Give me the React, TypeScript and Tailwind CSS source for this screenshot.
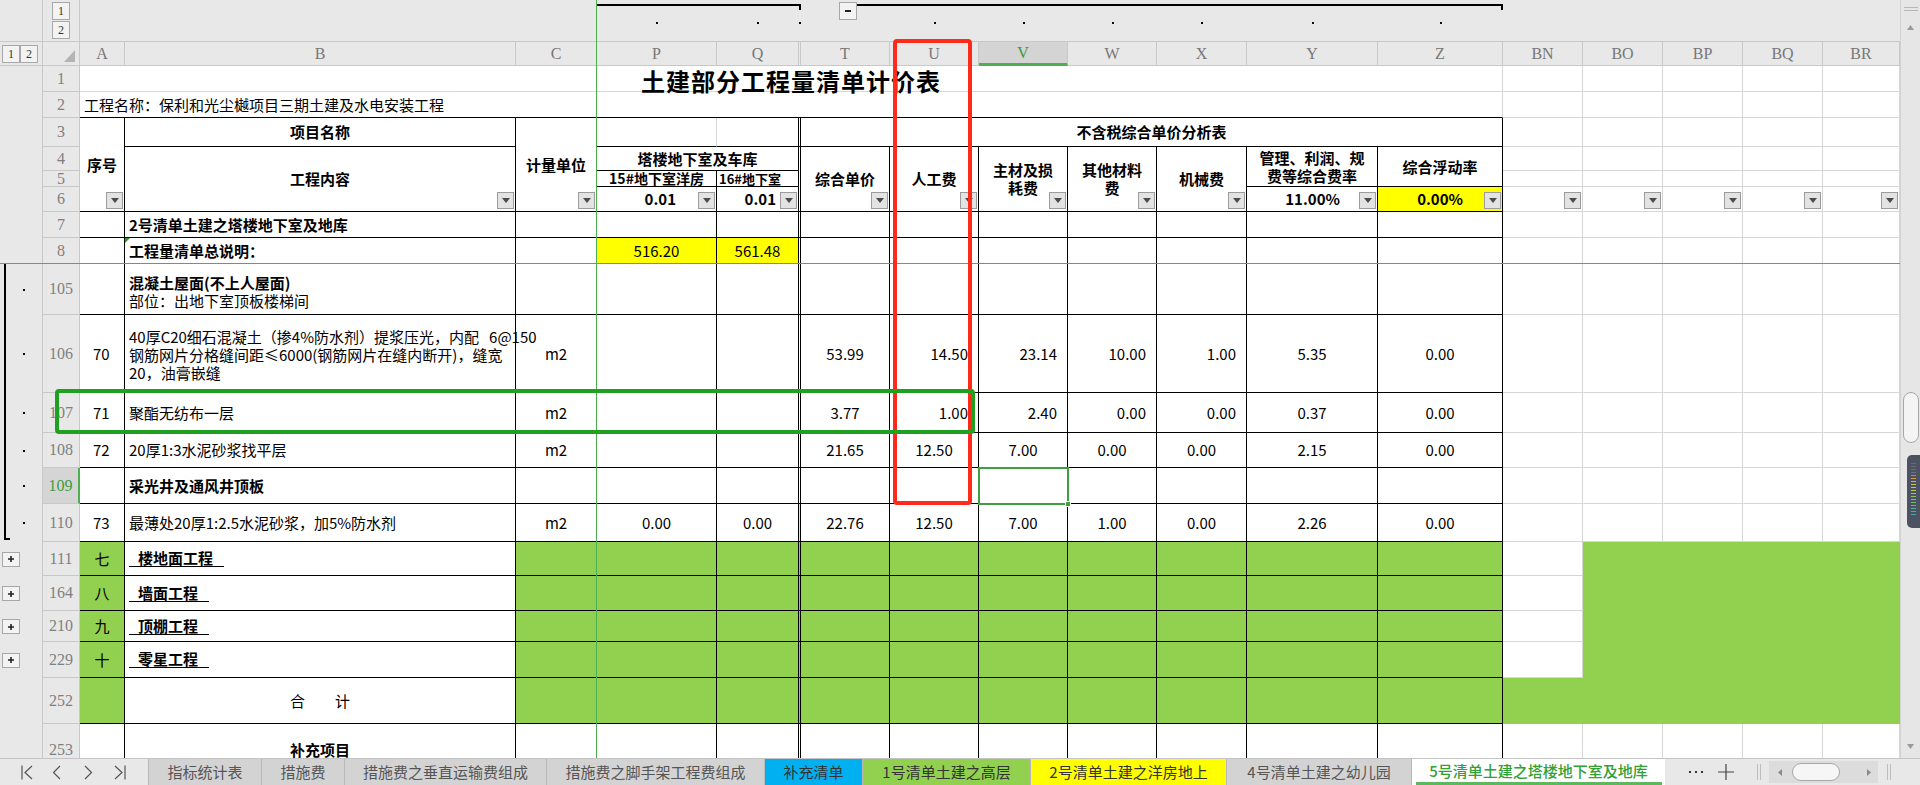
import React from 'react';

const K = 'border-r border-b border-black';
const G = 'border-r border-b border-[#d6d6d6]';
const GREEN = 'bg-[#92d050]';
const HB = 'bg-[#e8e8e8]';

function DD() {
  return (
    <div className="absolute right-[1px] bottom-[2px] w-[17px] h-[17px] border border-[#9c9c9c] bg-[#e3e3e3] flex items-center justify-center">
      <svg width="8" height="5" viewBox="0 0 8 5">
        <path d="M0 0H8L4 5Z" fill="#4a4a4a" />
      </svg>
    </div>
  );
}

function Lvl({ t }: { t: string }) {
  return (
    <div className="w-[18px] h-[18px] border border-[#a8a8a8] bg-[#f3f3f3] flex items-center justify-center text-[12px] leading-none text-[#333] font-['Liberation_Serif',serif]">
      {t}
    </div>
  );
}

function OL({ kind }: { kind?: 'dot' | 'end' | 'plus' }) {
  return (
    <div className={`${HB} border-r border-[#c8c8c8] flex items-center`}>
      {(kind === 'dot' || kind === 'end') && (
        <>
          <div className={`self-stretch ml-[4px] w-[6px] flex flex-col ${kind === 'end' ? 'pb-[2px]' : ''}`}>
            <div className="flex-1 w-[2px] bg-black" />
            {kind === 'end' && <div className="h-[2px] w-[6px] bg-black" />}
          </div>
          <div className="ml-[13px] w-[2px] h-[2px] bg-black" />
        </>
      )}
      {kind === 'plus' && (
        <div className="ml-[2px] w-[18px] h-[15px] border border-[#a8a8a8] bg-[#f3f3f3] flex items-center justify-center">
          <svg width="6" height="6" viewBox="0 0 6 6">
            <path d="M3 0V6M0 3H6" stroke="#222" strokeWidth="1.6" />
          </svg>
        </div>
      )}
    </div>
  );
}

function RH({ n, sel = false }: { n: string; sel?: boolean }) {
  return (
    <div
      className={`flex items-center justify-center font-['Liberation_Serif',serif] text-[16px] border-b border-b-[#c8c8c8] ${
        sel
          ? 'bg-[#d5d5d5] text-[#3c9c3c] border-r-2 border-r-[#4caf50]'
          : 'bg-[#e8e8e8] text-[#808080] border-r border-r-[#c8c8c8]'
      }`}
    >
      {n}
    </div>
  );
}

function Hd({ t = '', sel = false }: { t?: string; sel?: boolean }) {
  return (
    <div
      className={`flex items-center justify-center font-['Liberation_Serif',serif] text-[16px] border-r border-r-[#c8c8c8] ${
        sel
          ? 'bg-[#d4d4d4] text-[#3a9a3a] border-b-[3px] border-b-[#4caf50]'
          : 'bg-[#e8e8e8] text-[#777] border-b border-b-[#c8c8c8]'
      }`}
    >
      {t}
    </div>
  );
}

function Out({ line = true, tick = false, dot = true }: { line?: boolean; tick?: boolean; dot?: boolean }) {
  return (
    <div className={`${HB} border-b border-[#c8c8c8] flex flex-col`}>
      <div className="mt-[4px] h-[6px] flex">
        {line && <div className="flex-1 h-[2px] bg-black" />}
        {tick && <div className="w-[2px] h-[6px] bg-black" />}
      </div>
      {dot && (
        <div className="mt-[12px] flex justify-center">
          <div className="w-[2px] h-[2px] bg-black" />
        </div>
      )}
    </div>
  );
}

function Tail({ dd = false }: { dd?: boolean }) {
  return (
    <>
      {[0, 1, 2, 3, 4].map((i) => (
        <div key={i} className={`${G} relative`}>
          {dd && <DD />}
        </div>
      ))}
    </>
  );
}

type Al = 'c' | 'r';

function Num({ v, al }: { v?: string; al: Al }) {
  return (
    <div className={`${K} flex items-center ${al === 'c' ? 'justify-center' : 'justify-end pr-[10px]'}`}>{v}</div>
  );
}

function DataRow({
  n,
  ol,
  sel,
  a,
  b,
  c,
  p,
  q,
  pq = '',
  rs = '',
  t = [],
  al = ['c', 'c', 'c', 'c', 'c', 'c', 'c'],
}: {
  n: string;
  ol?: 'dot' | 'end' | 'plus';
  sel?: boolean;
  a?: string;
  b?: React.ReactNode;
  c?: string;
  p?: string;
  q?: string;
  pq?: string;
  rs?: string;
  t?: string[];
  al?: Al[];
}) {
  return (
    <>
      <OL kind={ol} />
      <RH n={n} sel={sel} />
      <div className={`${K} flex items-center pl-[13px]`}>{a}</div>
      <div className={`${K} relative flex items-center pl-[4px] whitespace-pre`}>{b}</div>
      <div className={`${K} flex items-center justify-center`}>{c}</div>
      <div className={`${K} ${pq} flex items-center justify-center`}>{p}</div>
      <div className={`${K} ${pq} flex items-center justify-center`}>{q}</div>
      <div className={`${K} ${rs}`} />
      {[0, 1, 2, 3, 4, 5, 6].map((i) => (
        <Num key={i} v={t[i]} al={al[i]} />
      ))}
      <Tail />
    </>
  );
}

function GreenRow({ n, cn, title }: { n: string; cn: string; title: string }) {
  return (
    <>
      <OL kind="plus" />
      <RH n={n} />
      <div className={`${K} ${GREEN} flex items-center justify-center`}>{cn}</div>
      <div className={`${K} flex items-center pl-[4px]`}>
        <span className="inline-block border-b border-black pl-[9px] pr-[11px] leading-[16px] font-bold">{title}</span>
      </div>
      {Array.from({ length: 11 }).map((_, i) => (
        <div key={i} className={`${K} ${GREEN}`} />
      ))}
      <div className={G} />
      <div className={`col-span-4 ${GREEN}`} />
    </>
  );
}

function Tab({ cls, children }: { cls: string; children: React.ReactNode }) {
  return (
    <div className={`flex items-center justify-center border-r border-[#b9b9b9] whitespace-nowrap ${cls}`}>{children}</div>
  );
}

const bars = [
  '#666c7c', '#666c7c', '#666c7c', '#6c7282', '#c4873a', '#d89c3a', '#d8b03c', '#d4c040', '#c8c944',
  '#b6ca48', '#a2c650', '#8ec458', '#7ac062', '#66bc72', '#52b882', '#46b494', '#3eb0a4', '#3aaab0',
];

export default function App() {
  const r106 = ['c', 'r', 'r', 'r', 'r', 'c', 'c'] as Al[];
  return (
    <div className="w-[1920px] h-[785px] overflow-hidden bg-white flex flex-col font-['Noto_Sans_CJK_SC',sans-serif] text-[15px] leading-[18px] text-black">
      <div className="flex h-[758px]">
        <div className="relative w-[1900px] h-[758px] overflow-hidden">
          <div className="grid grid-cols-[43px_37px_45px_391px_81px_120px_82px_2px_89px_89px_89px_89px_90px_131px_125px_80px_80px_80px_80px_77px] grid-rows-[42px_24px_26px_26px_29px_24px_16px_25px_26px_26px_51px_78px_40px_35px_36px_38px_34px_35px_31px_36px_46px_52px]">
            {/* outline strip */}
            <div className={`${HB} border-r border-b border-[#c8c8c8]`} />
            <div className={`${HB} border-r border-b border-[#c8c8c8] flex flex-col items-center pt-[2px] gap-[1px]`}>
              <Lvl t="1" />
              <Lvl t="2" />
            </div>
            <div className={`col-span-3 ${HB} border-b border-[#c8c8c8]`} />
            <Out />
            <Out />
            <Out line={false} tick />
            <div className={`${HB} border-b border-[#c8c8c8] flex items-start`}>
              <div className="ml-[38px] mt-[2px] w-[18px] h-[18px] border border-[#a8a8a8] bg-[#f3f3f3] flex items-center justify-center">
                <div className="w-[6px] h-[2px] bg-[#222]" />
              </div>
              <div className="flex-1 mt-[4px] h-[2px] bg-black" />
            </div>
            <Out />
            <Out />
            <Out />
            <Out />
            <Out />
            <Out tick />
            <div className={`col-span-5 ${HB} border-b border-[#c8c8c8]`} />

            {/* column headers */}
            <div className={`${HB} border-r border-b border-[#c8c8c8] flex items-center pl-[2px]`}>
              <Lvl t="1" />
              <Lvl t="2" />
            </div>
            <div className={`${HB} border-r border-b border-[#c8c8c8] flex items-end justify-end pr-[4px] pb-[3px]`}>
              <svg width="11" height="12" viewBox="0 0 11 12">
                <path d="M11 0V12H0Z" fill="#b4b4b4" />
              </svg>
            </div>
            <Hd t="A" />
            <Hd t="B" />
            <Hd t="C" />
            <Hd t="P" />
            <Hd t="Q" />
            <Hd />
            <Hd t="T" />
            <Hd t="U" />
            <Hd t="V" sel />
            <Hd t="W" />
            <Hd t="X" />
            <Hd t="Y" />
            <Hd t="Z" />
            <Hd t="BN" />
            <Hd t="BO" />
            <Hd t="BP" />
            <Hd t="BQ" />
            <Hd t="BR" />

            {/* row 1 */}
            <OL />
            <RH n="1" />
            <div className={`col-span-13 ${G} flex items-center justify-center pt-[4px] font-bold text-[24px] leading-none tracking-[1px]`}>
              土建部分工程量清单计价表
            </div>
            <Tail />

            {/* row 2 */}
            <OL />
            <RH n="2" />
            <div className="col-span-13 border-r border-b border-r-[#d6d6d6] border-b-black flex items-center pl-[4px]">
              工程名称：保利和光尘樾项目三期土建及水电安装工程
            </div>
            <Tail />

            {/* row 3 */}
            <OL />
            <RH n="3" />
            <div className={`row-span-4 ${K} relative flex items-center justify-center font-bold`}>
              序号
              <DD />
            </div>
            <div className={`${K} flex items-center justify-center font-bold`}>项目名称</div>
            <div className={`row-span-4 ${K} relative flex items-center justify-center font-bold`}>
              计量单位
              <DD />
            </div>
            <div className="border-r border-b border-r-[#d6d6d6] border-b-black" />
            <div className={K} />
            <div className={K} />
            <div className={`col-span-7 ${K} flex items-center justify-center font-bold`}>不含税综合单价分析表</div>
            <Tail />

            {/* row 4 */}
            <OL />
            <RH n="4" />
            <div className={`row-span-3 ${K} relative flex items-center justify-center font-bold`}>
              工程内容
              <DD />
            </div>
            <div className={`col-span-2 ${K} flex items-center justify-center font-bold`}>塔楼地下室及车库</div>
            <div className={`row-span-3 ${K}`} />
            <div className={`row-span-3 ${K} relative flex items-center justify-center font-bold`}>
              综合单价
              <DD />
            </div>
            <div className={`row-span-3 ${K} relative flex items-center justify-center font-bold`}>
              人工费
              <DD />
            </div>
            <div className={`row-span-3 ${K} relative flex items-center justify-center text-center font-bold`}>
              <span>
                主材及损
                <br />
                耗费
              </span>
              <DD />
            </div>
            <div className={`row-span-3 ${K} relative flex items-center justify-center text-center font-bold`}>
              <span>
                其他材料
                <br />
                费
              </span>
              <DD />
            </div>
            <div className={`row-span-3 ${K} relative flex items-center justify-center font-bold`}>
              机械费
              <DD />
            </div>
            <div className={`row-span-2 ${K} flex items-center justify-center text-center font-bold`}>
              <span>
                管理、利润、规
                <br />
                费等综合费率
              </span>
            </div>
            <div className={`row-span-2 ${K} flex items-center justify-center font-bold`}>综合浮动率</div>
            <Tail />

            {/* row 5 */}
            <OL />
            <RH n="5" />
            <div className={`${K} flex items-center justify-center font-bold text-[14px] leading-[15px] whitespace-nowrap`}>
              15#地下室洋房
            </div>
            <div className={`${K} flex items-center pl-[2px] font-bold text-[13px] leading-[15px] whitespace-nowrap`}>
              16#地下室
            </div>
            <Tail />

            {/* row 6 */}
            <OL />
            <RH n="6" />
            <div className={`${K} relative flex items-center justify-end pr-[40px] font-bold`}>
              0.01
              <DD />
            </div>
            <div className={`${K} relative flex items-center justify-end pr-[22px] font-bold`}>
              0.01
              <DD />
            </div>
            <div className={`${K} relative flex items-center justify-end pr-[37px] font-bold`}>
              11.00%
              <DD />
            </div>
            <div className={`${K} relative bg-[#ffff00] flex items-center justify-end pr-[39px] font-bold`}>
              0.00%
              <DD />
            </div>
            <Tail dd />

            <DataRow n="7" b={<span className="font-bold">2号清单土建之塔楼地下室及地库</span>} />
            <DataRow
              n="8"
              b={
                <>
                  <div className="absolute left-0 top-0 w-0 h-0 border-t-[5px] border-r-[5px] border-t-[#2e9a2e] border-r-transparent" />
                  <span className="font-bold">工程量清单总说明：</span>
                </>
              }
              p="516.20"
              q="561.48"
              pq="bg-[#ffff00]"
            />
            <DataRow
              n="105"
              ol="dot"
              b={
                <div className="flex flex-col pt-[5px]">
                  <span className="font-bold">混凝土屋面(不上人屋面)</span>
                  <span>部位：出地下室顶板楼梯间</span>
                </div>
              }
            />
            <DataRow
              n="106"
              ol="dot"
              a="70"
              b={
                <div className="flex flex-col pt-[3px]">
                  <span>40厚C20细石混凝土（掺4%防水剂）提浆压光，内配   6@150</span>
                  <span>钢筋网片分格缝间距≤6000(钢筋网片在缝内断开)，缝宽</span>
                  <span>20，油膏嵌缝</span>
                </div>
              }
              c="m2"
              t={['53.99', '14.50', '23.14', '10.00', '1.00', '5.35', '0.00']}
              al={r106}
            />
            <DataRow
              n="107"
              ol="dot"
              a="71"
              b="聚酯无纺布一层"
              c="m2"
              t={['3.77', '1.00', '2.40', '0.00', '0.00', '0.37', '0.00']}
              al={r106}
            />
            <DataRow
              n="108"
              ol="dot"
              a="72"
              b="20厚1:3水泥砂浆找平层"
              c="m2"
              t={['21.65', '12.50', '7.00', '0.00', '0.00', '2.15', '0.00']}
            />
            <DataRow n="109" ol="dot" sel b={<span className="font-bold">采光井及通风井顶板</span>} />
            <DataRow
              n="110"
              ol="end"
              a="73"
              b="最薄处20厚1:2.5水泥砂浆，加5%防水剂"
              c="m2"
              p="0.00"
              q="0.00"
              rs="bg-[#ffff00]"
              t={['22.76', '12.50', '7.00', '1.00', '0.00', '2.26', '0.00']}
            />

            <GreenRow n="111" cn="七" title="楼地面工程" />
            <GreenRow n="164" cn="八" title="墙面工程" />
            <GreenRow n="210" cn="九" title="顶棚工程" />
            <GreenRow n="229" cn="十" title="零星工程" />

            {/* row 252 */}
            <OL />
            <RH n="252" />
            <div className={`${K} ${GREEN}`} />
            <div className={`${K} flex items-center justify-center gap-[30px]`}>
              <span>合</span>
              <span>计</span>
            </div>
            {Array.from({ length: 11 }).map((_, i) => (
              <div key={i} className={`${K} ${GREEN}`} />
            ))}
            <div className={`col-span-5 ${GREEN}`} />

            {/* row 253 */}
            <OL />
            <RH n="253" />
            <div className={K} />
            <div className={`${K} flex items-center justify-center font-bold`}>补充项目</div>
            {Array.from({ length: 11 }).map((_, i) => (
              <div key={i} className={K} />
            ))}
            <Tail />
          </div>

          {/* freeze panes */}
          <div className="absolute left-[596px] top-0 w-px h-[758px] bg-[#4caf50]" />
          <div className="absolute left-0 top-[263px] w-[1900px] h-px bg-[#4caf50]" />

          {/* active cell V109 */}
          <div className="absolute left-[978px] top-[467px] w-[91px] h-[38px] border-2 border-[#3f9e3f]">
            <div className="absolute -right-[4px] -bottom-[4px] w-[6px] h-[6px] bg-[#3f9e3f] border border-white" />
          </div>

          {/* hand-drawn marks */}
          <div className="absolute left-[893px] top-[39px] w-[79px] h-[466px] border-4 border-[#ff2a1a] rounded-[4px]" />
          <div className="absolute left-[55px] top-[389px] w-[920px] h-[45px] border-4 border-[#20a020] rounded-[4px]" />
        </div>

        {/* vertical scrollbar */}
        <div className="w-[20px] h-[758px] bg-[#e6e6e6] border-l border-[#d2d2d2] flex flex-col items-center">
          <div className="mt-[7px] w-[14px] h-[4px] border-t border-b border-[#b8b8b8]" />
          <svg className="mt-[14px]" width="7" height="5" viewBox="0 0 7 5">
            <path d="M3.5 0L7 5H0Z" fill="#9a9a9a" />
          </svg>
          <div className="mt-[362px] w-[16px] h-[51px] rounded-[8px] border border-[#a8a8a8] bg-[#f4f4f4]" />
          <div className="mt-[12px] self-end w-[13px] h-[73px] rounded-l-[5px] bg-[#4c5262] flex flex-col items-center pt-[8px] gap-[2px]">
            {bars.map((c, i) => (
              <div key={i} className="w-[5px] h-px" style={{ backgroundColor: c }} />
            ))}
          </div>
          <svg className="mt-[216px]" width="7" height="5" viewBox="0 0 7 5">
            <path d="M0 0H7L3.5 5Z" fill="#9a9a9a" />
          </svg>
        </div>
      </div>

      {/* sheet tabs */}
      <div className="h-[27px] flex bg-[#e8e8e8] border-t border-[#c4c4c4] text-[15px] text-[#555]">
        <div className="w-[147px] flex items-center">
          <svg className="ml-[21px]" width="13" height="15" viewBox="0 0 13 15" fill="none" stroke="#555" strokeWidth="1.2">
            <path d="M1 0.5V14.5M11 1L4 7.5L11 14" />
          </svg>
          <svg className="ml-[18px]" width="9" height="15" viewBox="0 0 9 15" fill="none" stroke="#555" strokeWidth="1.2">
            <path d="M8 1L1.5 7.5L8 14" />
          </svg>
          <svg className="ml-[23px]" width="9" height="15" viewBox="0 0 9 15" fill="none" stroke="#555" strokeWidth="1.2">
            <path d="M1 1L7.5 7.5L1 14" />
          </svg>
          <svg className="ml-[20px]" width="13" height="15" viewBox="0 0 13 15" fill="none" stroke="#555" strokeWidth="1.2">
            <path d="M2 1L9 7.5L2 14M12 0.5V14.5" />
          </svg>
        </div>
        <div className="w-[2px] border-r border-[#b9b9b9]" />
        <Tab cls="w-[113px] bg-[#d3d3d3]">指标统计表</Tab>
        <Tab cls="w-[83px] bg-[#d3d3d3]">措施费</Tab>
        <Tab cls="w-[202px] bg-[#d3d3d3]">措施费之垂直运输费组成</Tab>
        <Tab cls="w-[218px] bg-[#d3d3d3]">措施费之脚手架工程费组成</Tab>
        <Tab cls="w-[98px] bg-[#00b0f0] text-[#333]">补充清单</Tab>
        <Tab cls="w-[168px] bg-[#92d050] text-[#333]">1号清单土建之高层</Tab>
        <Tab cls="w-[196px] bg-[#ffff00] text-[#333]">2号清单土建之洋房地上</Tab>
        <Tab cls="w-[185px] bg-[#d3d3d3]">4号清单土建之幼儿园</Tab>
        <div className="w-[253px] bg-white flex flex-col items-center">
          <div className="flex-1 flex items-center text-[#33a033] font-medium">5号清单土建之塔楼地下室及地库</div>
          <div className="w-[246px] h-[3px] bg-[#5cb85c]" />
        </div>
        <div className="flex items-center">
          <div className="ml-[24px] w-[14px] flex justify-between">
            <div className="w-[2px] h-[2px] bg-[#333]" />
            <div className="w-[2px] h-[2px] bg-[#333]" />
            <div className="w-[2px] h-[2px] bg-[#333]" />
          </div>
          <svg className="ml-[15px]" width="16" height="16" viewBox="0 0 16 16" stroke="#444" strokeWidth="1.2">
            <path d="M8 0V16M0 8H16" />
          </svg>
          <div className="ml-[23px] w-[4px] h-[16px] border-l border-r border-[#bdbdbd]" />
          <div className="ml-[8px] w-[109px] h-[22px] bg-[#dcdcdc] flex items-center">
            <svg className="ml-[9px]" width="4" height="7" viewBox="0 0 4 7">
              <path d="M4 0V7L0 3.5Z" fill="#8a8a8a" />
            </svg>
            <div className="ml-[10px] w-[48px] h-[18px] rounded-[9px] border border-[#a8a8a8] bg-[#f6f6f6]" />
            <svg className="ml-[27px]" width="4" height="7" viewBox="0 0 4 7">
              <path d="M0 0V7L4 3.5Z" fill="#8a8a8a" />
            </svg>
          </div>
          <div className="ml-[9px] w-[4px] h-[16px] border-l border-r border-[#bdbdbd]" />
        </div>
      </div>
    </div>
  );
}
